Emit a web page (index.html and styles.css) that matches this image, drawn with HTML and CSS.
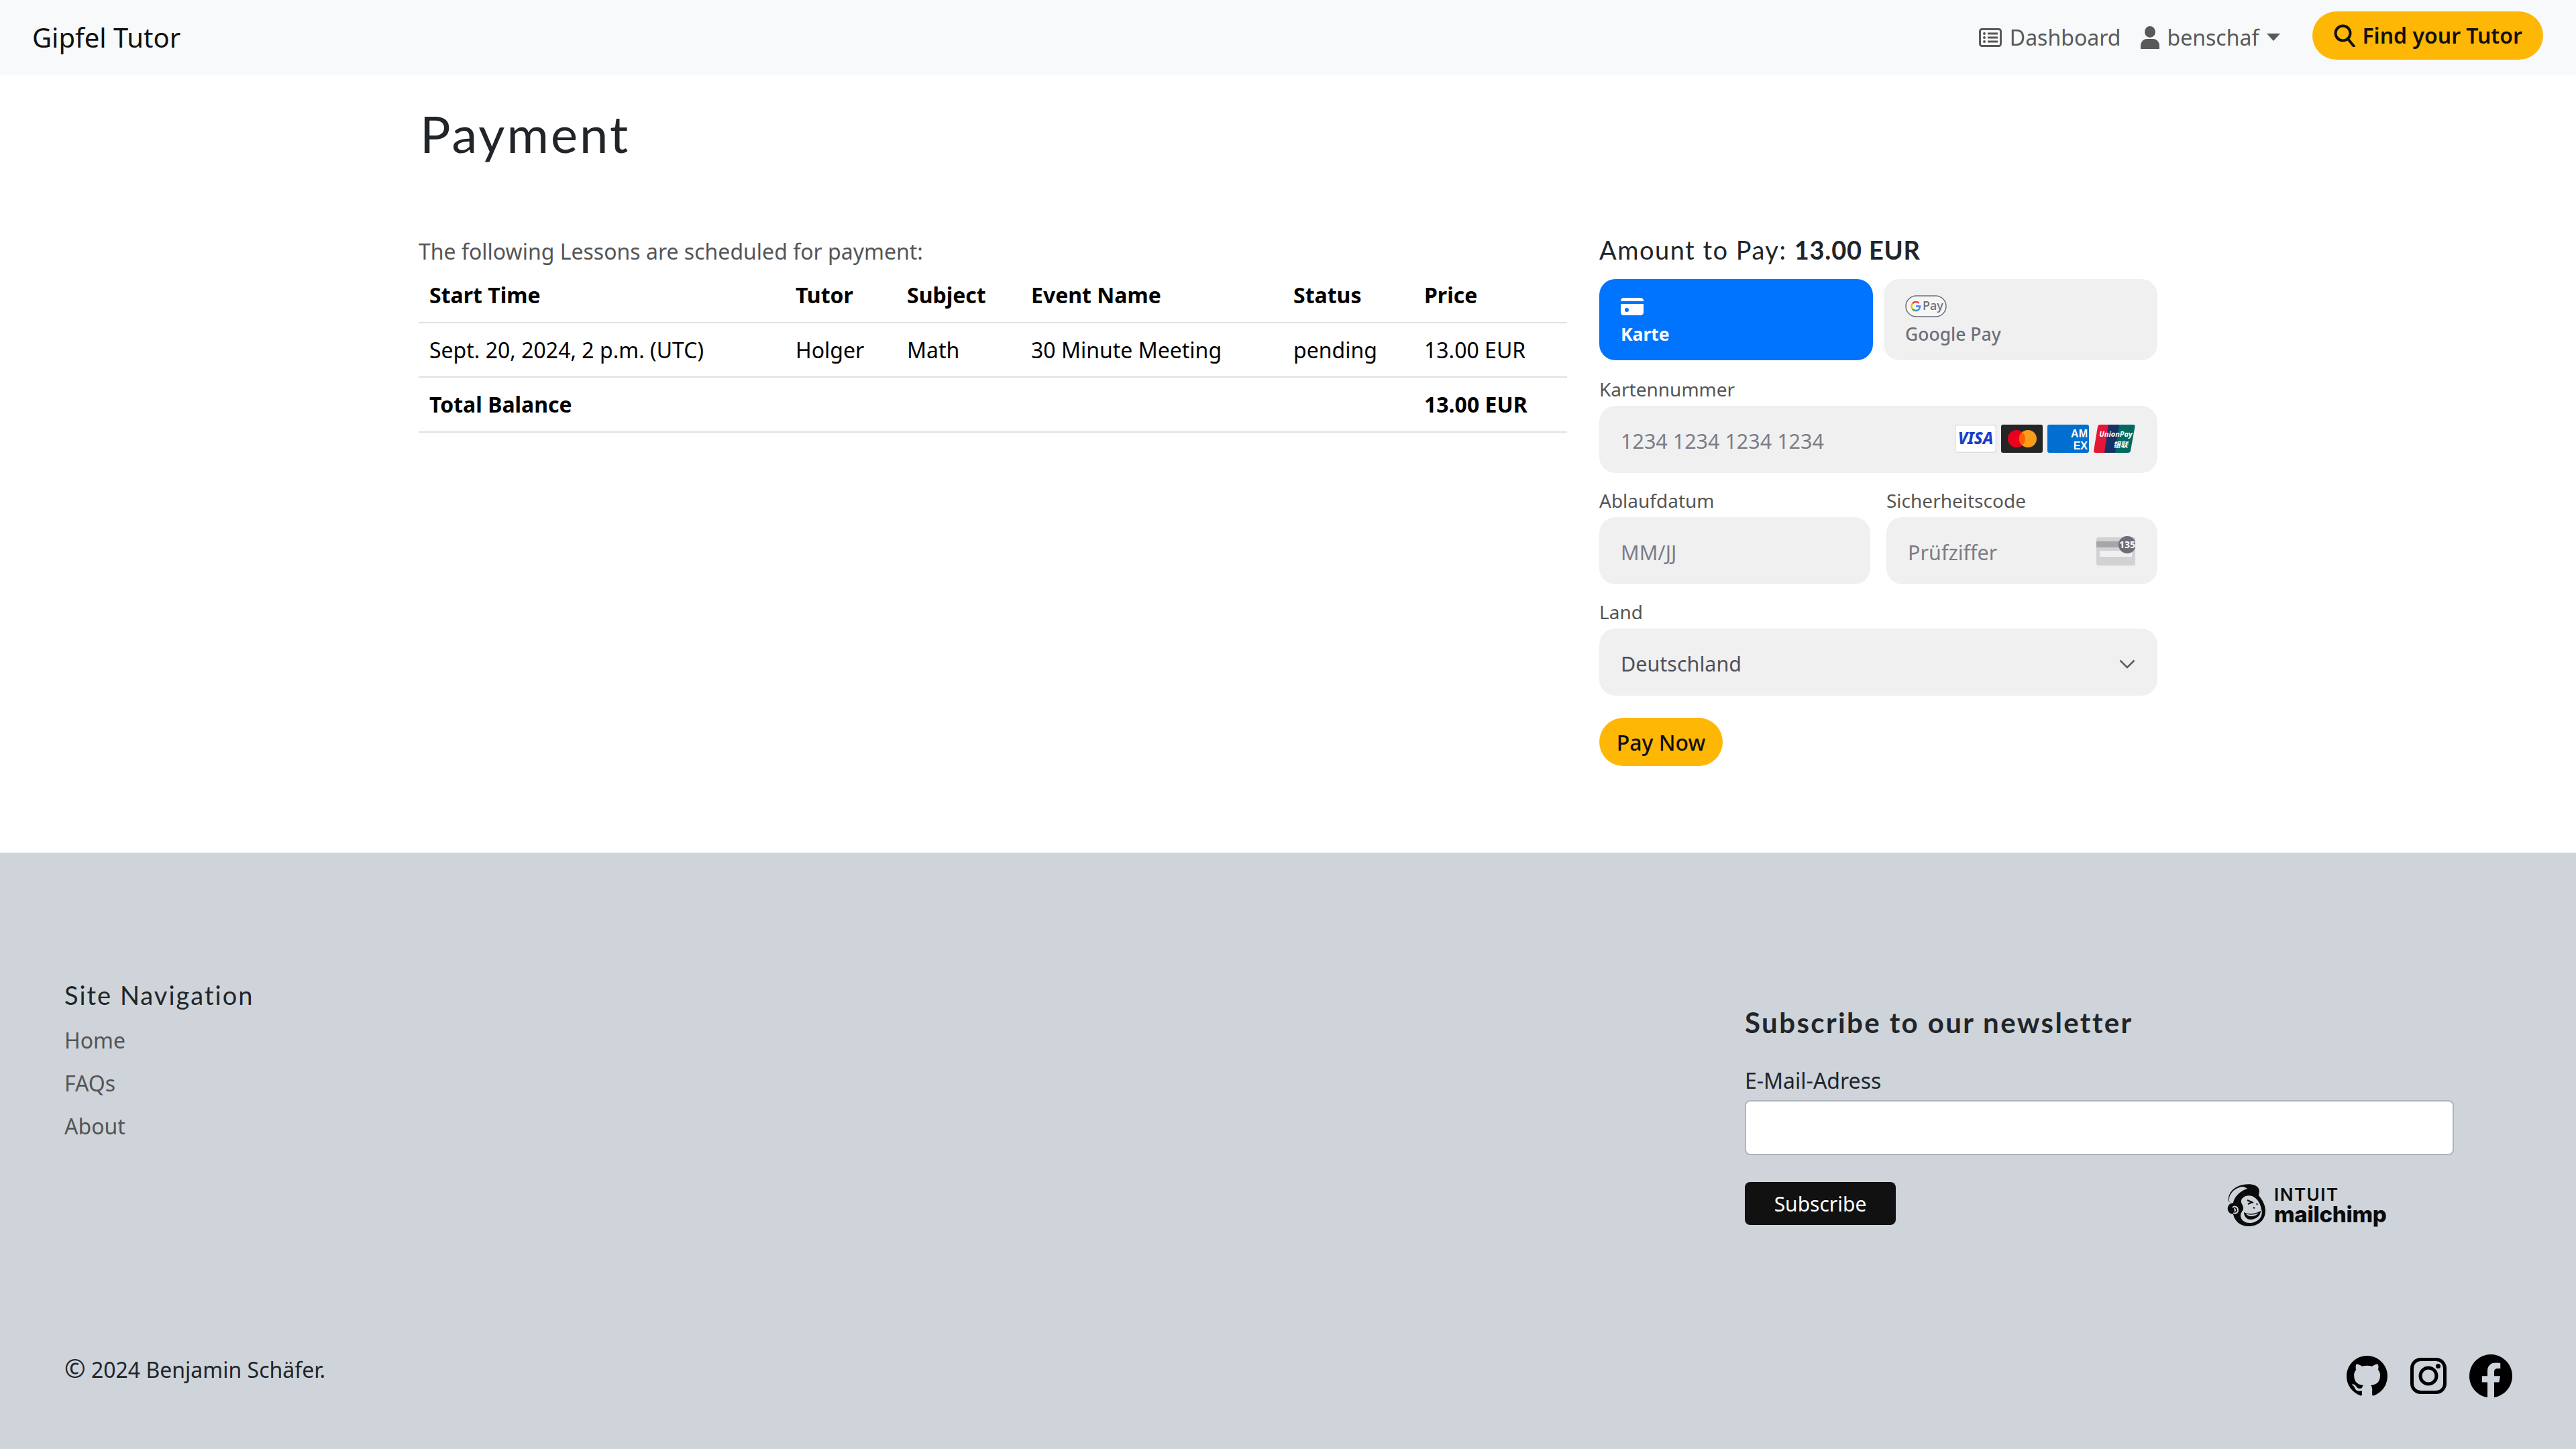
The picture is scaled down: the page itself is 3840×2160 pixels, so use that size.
FILE: index.html
```html
<!DOCTYPE html>
<html>
<head>
<title>Payment - Gipfel Tutor</title>
<link rel="stylesheet" href="styles.css">
</head>
<body>
  <nav class="navbar">
    <a class="brand">Gipfel Tutor</a>
    <div class="nav-right">
      <a class="nav-link">
        <svg class="icon-dash" viewBox="0 0 34 28"><rect x="1.5" y="1.5" width="31" height="25" rx="3" fill="none" stroke="#595959" stroke-width="3"/><g fill="#595959"><circle cx="8" cy="8" r="2"/><circle cx="8" cy="14" r="2"/><circle cx="8" cy="20" r="2"/><rect x="13" y="6.5" width="15" height="3"/><rect x="13" y="12.5" width="15" height="3"/><rect x="13" y="18.5" width="15" height="3"/></g></svg>
        Dashboard
      </a>
      <a class="nav-link user-link">
        <svg class="icon-user" viewBox="0 0 28 34"><ellipse cx="14" cy="8.5" rx="8" ry="8.5" fill="#595959"/><path d="M0 34V29C0 23 5 19 9 19H19C23 19 28 23 28 29V34Z" fill="#595959"/></svg>
        benschaf
        <span class="caret"></span>
      </a>
      <a class="btn-find">
        <svg class="icon-search" viewBox="0 0 32 34"><circle cx="13.5" cy="13.5" r="11" fill="none" stroke="#111" stroke-width="4"/><path d="M21 22L30 33" stroke="#111" stroke-width="4" stroke-linecap="round"/></svg>
        Find your Tutor
      </a>
    </div>
  </nav>

  <main class="page">
    <h1 class="page-title">Payment</h1>
    <div class="columns">
      <section class="lessons">
        <p class="lessons-intro">The following Lessons are scheduled for payment:</p>
        <table class="lesson-table">
          <thead>
            <tr><th class="col-time">Start Time</th><th class="col-tutor">Tutor</th><th class="col-subject">Subject</th><th class="col-event">Event Name</th><th class="col-status">Status</th><th>Price</th></tr>
          </thead>
          <tbody>
            <tr><td>Sept. 20, 2024, 2 p.m. (UTC)</td><td>Holger</td><td>Math</td><td>30 Minute Meeting</td><td>pending</td><td>13.00 EUR</td></tr>
            <tr class="total-row"><td>Total Balance</td><td></td><td></td><td></td><td></td><td>13.00 EUR</td></tr>
          </tbody>
        </table>
      </section>

      <section class="checkout">
        <h2 class="amount">Amount to Pay: <strong>13.00 EUR</strong></h2>
        <div class="tabs">
          <div class="tab tab-active">
            <svg class="icon-card" viewBox="0 0 34 26"><path d="M0 4C0 2 2 0 4 0H30C32 0 34 2 34 4V5H0ZM0 9H34V22C34 24 32 26 30 26H4C2 26 0 24 0 22Z" fill="#fff"/><circle cx="9" cy="18" r="3" fill="#0074ff"/></svg>
            <span>Karte</span>
          </div>
          <div class="tab">
            <svg class="icon-gpay" viewBox="0 0 62 33"><rect x="1" y="1" width="60" height="31" rx="15.5" fill="#fff" fill-opacity=".4" stroke="#6d6e78" stroke-width="1.5"/><path d="M16 16.500H22C22 21 19 23 16 23" fill="none" stroke="#4285f4" stroke-width="2.500"/><path d="M11 12.500A6.500 6.500 0 0 1 20.500 11.800" fill="none" stroke="#ea4335" stroke-width="2.500"/><path d="M10.800 20.500A6.500 6.500 0 0 0 16.500 23" fill="none" stroke="#34a853" stroke-width="2.500"/><path d="M11 12.500A6.500 6.500 0 0 0 10.800 20.500" fill="none" stroke="#fbbc04" stroke-width="2.500"/><text x="26" y="22" class="gpay-text">Pay</text></svg>
            <span>Google Pay</span>
          </div>
        </div>

        <label class="field-label">Kartennummer</label>
        <div class="field">
          <span class="placeholder">1234 1234 1234 1234</span>
          <div class="brands">
            <svg class="brand-icon" viewBox="0 0 62 42"><rect x=".75" y=".75" width="60.5" height="40.5" rx="3" fill="#fff" stroke="#e0e0e0" stroke-width="1.5"/><text x="31" y="29" class="visa-text">VISA</text></svg>
            <svg class="brand-icon" viewBox="0 0 62 42"><rect width="62" height="42" rx="3" fill="#252525"/><circle cx="23" cy="21" r="13" fill="#eb001b"/><circle cx="40" cy="21" r="13" fill="#f79e1b"/><path d="M31.500 11.200A13 13 0 0 1 31.500 30.800A13 13 0 0 1 31.500 11.200Z" fill="#ff5f00"/></svg>
            <svg class="brand-icon" viewBox="0 0 62 42"><rect width="62" height="42" rx="3" fill="#006fcf"/><text x="60" y="19" class="amex-text">AM</text><text x="60" y="37" class="amex-text">EX</text></svg>
            <svg class="brand-icon" viewBox="0 0 62 42"><path d="M10 0H24L18 42H3C1 42 0 41 0 39L6 3C6 1 8 0 10 0Z" fill="#e21836"/><path d="M22 0H40L34 42H16Z" fill="#173166"/><path d="M38 0H58C61 0 62 1 61.500 3L55 39C55 41 53 42 51 42H32Z" fill="#006a60"/><text x="33" y="18" class="up-text">UnionPay</text><text x="40" y="34" class="up-text">银联</text></svg>
          </div>
        </div>

        <div class="field-row">
          <div class="field-col">
            <label class="field-label">Ablaufdatum</label>
            <div class="field"><span class="placeholder">MM/JJ</span></div>
          </div>
          <div class="field-col">
            <label class="field-label">Sicherheitscode</label>
            <div class="field">
              <span class="placeholder">Prüfziffer</span>
              <svg class="icon-cvc" viewBox="0 0 58 44"><rect y="2" width="58" height="42" rx="3" fill="#d2d2d4"/><rect y="8" width="58" height="9" fill="#a5a5aa"/><rect x="5" y="22" width="48" height="9" fill="#f0f0f0"/><circle cx="46" cy="13" r="13" fill="#6d6e78"/><text x="46" y="18" class="cvc-text">135</text></svg>
            </div>
          </div>
        </div>

        <label class="field-label">Land</label>
        <div class="field">
          <span class="select-value">Deutschland</span>
          <svg class="icon-chevron" viewBox="0 0 24 14"><path d="M1.500 1.500L12 12L22.500 1.500" fill="none" stroke="#5c5d68" stroke-width="2.500"/></svg>
        </div>

        <button class="btn-pay">Pay Now</button>
      </section>
    </div>
  </main>

  <footer class="footer">
    <div class="footer-top">
      <div class="site-nav">
        <h3 class="site-nav-title">Site Navigation</h3>
        <a class="site-link">Home</a>
        <a class="site-link">FAQs</a>
        <a class="site-link">About</a>
      </div>
      <div class="newsletter">
        <h2 class="newsletter-title">Subscribe to our newsletter</h2>
        <label class="email-label">E-Mail-Adress</label>
        <input class="email-input" type="email">
        <div class="newsletter-actions">
          <button class="btn-subscribe">Subscribe</button>
          <div class="mailchimp">
            <svg class="icon-chimp" viewBox="0 0 60 64">
              <path d="M4 24C3 12 14 3 26 1C36-1 47 1 49 7C51 11 49 14 49 17C55 24 59 32 59 40C59 54 48 63 34 63C21 63 13 55 11 45C3 44 1 37 4 32C5 30 7 29 9 29C6 28 4 26 4 24Z" fill="#0b0b0b"/>
              <path d="M5 25C4 14 14 6 24 4C28 4 31 6 32 7C22 10 13 18 11 28C8 29 5 28 5 25Z" fill="#ced4da"/>
              <path d="M24 22C30 15 40 17 44 21C48 24 52 30 53 38C56 47 50 56 38 58C28 59 22 53 22 47C22 43 25 41 26 37C27 31 20 28 24 22Z" fill="#ced4da"/>
              <path d="M27 42C34 46 43 45 52 40C52 48 44 53 37 53C31 53 27 48 27 42Z" fill="#0b0b0b"/>
              <path d="M30 44C36 47 43 46 49 43C47 46 42 48 37 48C34 48 31 46 30 44Z" fill="#ced4da"/>
              <path d="M32 24L41 28M33 30L39 27M46 29L47 31M41 35L43 36" fill="none" stroke="#0b0b0b" stroke-width="2"/>
              <path d="M10 35C13 32 18 34 18 39C18 43 14 45 11 43M12 37C14 37 15 39 13 41" fill="none" stroke="#ced4da" stroke-width="2"/>
            </svg>
            <div class="chimp-words">
              <span class="chimp-intuit">INTUIT</span>
              <span class="chimp-name">mailchimp</span>
            </div>
          </div>
        </div>
      </div>
    </div>
    <div class="footer-bottom">
      <span class="copyright"><span class="copy-sign">©</span> 2024 Benjamin Schäfer.</span>
      <div class="socials">
        <svg class="icon-github" viewBox="0 0 16 16"><path d="M8 0C3.58 0 0 3.58 0 8c0 3.54 2.29 6.53 5.47 7.59.4.07.55-.17.55-.38 0-.19-.01-.82-.01-1.49-2.01.37-2.53-.49-2.69-.94-.09-.23-.48-.94-.82-1.13-.28-.15-.68-.52-.01-.53.63-.01 1.08.58 1.23.82.72 1.21 1.87.87 2.33.66.07-.52.28-.87.51-1.07-1.78-.2-3.64-.89-3.64-3.95 0-.87.31-1.59.82-2.15-.08-.2-.36-1.02.08-2.12 0 0 .67-.21 2.2.82.64-.18 1.32-.27 2-.27.68 0 1.36.09 2 .27 1.53-1.04 2.2-.82 2.2-.82.44 1.1.16 1.92.08 2.12.51.56.82 1.27.82 2.15 0 3.07-1.87 3.75-3.65 3.95.29.25.54.73.54 1.48 0 1.07-.01 1.93-.01 2.2 0 .21.15.46.55.38A8.012 8.012 0 0 0 16 8c0-4.42-3.58-8-8-8z"/></svg>
        <svg class="icon-insta" viewBox="0 0 54 54"><rect x="2.500" y="2.500" width="49" height="49" rx="13" fill="none" stroke="#000" stroke-width="5"/><circle cx="27" cy="27" r="12" fill="none" stroke="#000" stroke-width="5"/><circle cx="41.500" cy="12.500" r="3.500"/></svg>
        <svg class="icon-fb" viewBox="0 0 16 16"><path d="M16 8.049c0-4.446-3.582-8.05-8-8.05C3.58 0-.002 3.603-.002 8.05c0 4.017 2.926 7.347 6.75 7.951v-5.625h-2.03V8.05H6.75V6.275c0-2.017 1.195-3.131 3.022-3.131.876 0 1.791.157 1.791.157v1.98h-1.009c-.993 0-1.303.621-1.303 1.258v1.51h2.218l-.354 2.326H9.25V16c3.824-.604 6.75-3.934 6.75-7.951z"/></svg>
      </div>
    </div>
  </footer>
</body>
</html>
```

FILE: styles.css
```css
* {
  box-sizing: border-box;
}

body {
  font-family: "Noto Sans", sans-serif;
  font-size: 32px;
  color: #212529;
  background-color: #fff;
  margin: 0;
  padding: 0;
}

h1, h2, h3, p {
  margin: 0;
  font-weight: 400;
}

/* navbar */
.navbar {
  height: 111px;
  background-color: #f8f9fa;
  display: flex;
  align-items: center;
  justify-content: space-between;
  padding: 0 49px 0 48px;
}

.brand {
  font-size: 40px;
  color: #111;
}

.nav-right {
  display: flex;
  align-items: center;
}

.nav-link {
  display: flex;
  align-items: center;
  gap: 12px;
  font-size: 32px;
  color: #595959;
  margin-right: 30px;
}

.user-link {
  gap: 11px;
  margin-right: 48px;
}

.icon-dash {
  width: 34px;
  height: 28px;
}

.icon-user {
  width: 28px;
  height: 34px;
}

.caret {
  width: 0;
  height: 0;
  margin-left: 1px;
  border-top: 11px solid #595959;
  border-left: 10px solid transparent;
  border-right: 10px solid transparent;
}

.btn-find {
  display: flex;
  align-items: center;
  gap: 10px;
  height: 72px;
  margin-bottom: 6px;
  padding: 0 31px 0 32px;
  border-radius: 36px;
  background-color: #ffb706;
  color: #111;
  font-size: 32px;
  font-weight: 600;
}

.icon-search {
  width: 32px;
  height: 34px;
}

/* main */
.page {
  width: 2592px;
  height: 1160px;
  margin: 0 auto;
}

.page-title {
  font-family: Lato, sans-serif;
  font-size: 76px;
  line-height: 96px;
  letter-spacing: 3px;
  padding: 40px 0 0 2px;
  height: 231px;
}

.columns {
  display: flex;
  gap: 48px;
}

.lessons {
  width: 1712px;
}

.lessons-intro {
  font-size: 32px;
  line-height: 44px;
  margin-top: 11px;
  color: #555;
}

.lesson-table {
  width: 100%;
  border-collapse: collapse;
  table-layout: fixed;
  margin-top: 2px;
  font-size: 32px;
  color: #000;
}

.lesson-table th,
.lesson-table td {
  text-align: left;
  padding: 0 16px;
  height: 81.500px;
  border-bottom: 2px solid #dee2e6;
}

.lesson-table th,
.total-row td {
  font-weight: 700;
}

.col-time { width: 546px; }
.col-tutor { width: 166px; }
.col-subject { width: 185px; }
.col-event { width: 391px; }
.col-status { width: 195px; }

.checkout {
  width: 832px;
}

.amount {
  font-family: Lato, sans-serif;
  font-size: 38px;
  line-height: 48px;
  letter-spacing: 1.500px;
  margin-top: 6px;
  color: #212529;
}

.amount strong {
  font-weight: 700;
  letter-spacing: .8px;
}

.tabs {
  display: flex;
  gap: 16px;
  margin: 20px 0 24px;
}

.tab {
  flex: 1;
  height: 121px;
  border-radius: 24px;
  background-color: #f0f0f0;
  color: #6d6e78;
  padding: 24px 32px 0;
  font-size: 26.500px;
  font-weight: 500;
  display: flex;
  flex-direction: column;
  align-items: flex-start;
}

.tab span {
  line-height: 38px;
  margin-top: 6px;
}

.tab-active {
  background-color: #0074ff;
  color: #fff;
  font-weight: 700;
}

.icon-card {
  width: 34px;
  height: 26px;
  margin-top: 4px;
  margin-bottom: 3px;
}

.icon-gpay {
  width: 62px;
  height: 33px;
}

.gpay-text {
  font-family: "Noto Sans", sans-serif;
  font-size: 18px;
  font-weight: 500;
  fill: #6d6e78;
}

.field-label {
  display: block;
  font-size: 28px;
  line-height: 38px;
  margin: 22px 0 6px;
  color: #555;
}

.field {
  height: 100px;
  border-radius: 24px;
  background-color: #f0f0f0;
  display: flex;
  align-items: center;
  justify-content: space-between;
  padding: 0 33px 0 32px;
}

.placeholder {
  font-size: 30.500px;
  margin-top: 4px;
  color: #7c7d86;
}

.select-value {
  font-size: 30.500px;
  margin-top: 4px;
  color: #4f505b;
}

.brands {
  display: flex;
  gap: 7px;
  margin-top: -2px;
}

.brand-icon {
  width: 62px;
  height: 42px;
}

.visa-text {
  font-family: "Noto Sans", sans-serif;
  font-size: 24px;
  font-weight: 800;
  font-style: italic;
  fill: #1a3ec8;
  text-anchor: middle;
}

.amex-text {
  font-family: "Liberation Sans", sans-serif;
  font-size: 16px;
  font-weight: 700;
  fill: #fff;
  text-anchor: end;
}

.up-text {
  font-family: "Noto Sans", "Noto Sans CJK SC", sans-serif;
  font-size: 11px;
  font-weight: 700;
  font-style: italic;
  fill: #fff;
  text-anchor: middle;
}

.field-row {
  display: flex;
  gap: 24px;
}

.field-col {
  flex: 1;
}

.icon-cvc {
  width: 58px;
  height: 44px;
}

.cvc-text {
  font-family: "Noto Sans", sans-serif;
  font-size: 14px;
  font-weight: 700;
  fill: #fff;
  text-anchor: middle;
}

.icon-chevron {
  width: 24px;
  height: 14px;
  margin-top: 6px;
}

.btn-pay {
  display: block;
  width: 184px;
  height: 72px;
  margin-top: 33px;
  border: none;
  border-radius: 36px;
  background-color: #ffb706;
  color: #111;
  font-family: "Noto Sans", sans-serif;
  font-size: 32px;
  font-weight: 500;
  padding: 0;
}

/* footer */
.footer {
  height: 889px;
  background-color: #ced4da;
  padding: 0 95px 0 96px;
}

.footer-top {
  display: flex;
  justify-content: space-between;
  height: 740px;
  padding-top: 188px;
}

.site-nav {
  display: flex;
  flex-direction: column;
}

.site-nav-title {
  font-family: Lato, sans-serif;
  font-size: 38px;
  line-height: 48px;
  letter-spacing: 2px;
  margin-bottom: 12px;
  color: #212529;
}

.site-link {
  font-size: 32px;
  line-height: 64px;
  color: #555;
}

.newsletter {
  width: 1057px;
  margin-right: 87px;
  padding-top: 40px;
}

.newsletter-title {
  font-family: Lato, sans-serif;
  font-size: 42px;
  font-weight: 700;
  line-height: 50px;
  letter-spacing: 2.400px;
}

.email-label {
  display: block;
  font-size: 32px;
  line-height: 44px;
  margin-top: 40px;
}

.email-input {
  display: block;
  width: 100%;
  height: 82px;
  margin-top: 7px;
  background-color: #fff;
  border: 2px solid #adb5bd;
  border-radius: 8px;
}

.newsletter-actions {
  display: flex;
  margin-top: 40px;
}

.btn-subscribe {
  width: 225px;
  height: 64px;
  border: none;
  border-radius: 8px;
  background-color: #111;
  color: #fff;
  font-family: "Noto Sans", sans-serif;
  font-size: 30px;
  padding: 0;
}

.mailchimp {
  display: flex;
  align-items: center;
  gap: 12px;
  margin-left: 492px;
  margin-top: 3px;
}

.icon-chimp {
  width: 60px;
  height: 64px;
}

.chimp-words {
  display: flex;
  flex-direction: column;
  font-family: Inter, sans-serif;
  color: #0b0b0b;
}

.chimp-intuit {
  font-size: 26px;
  font-weight: 600;
  line-height: 26px;
  letter-spacing: 1.500px;
}

.chimp-name {
  font-size: 33px;
  font-weight: 800;
  line-height: 32px;
  letter-spacing: -.3px;
}

.footer-bottom {
  display: flex;
  justify-content: space-between;
  align-items: center;
}

.copyright {
  font-size: 32px;
  margin-top: -12px;
}

.copy-sign {
  font-size: 38px;
  line-height: 32px;
}

.socials {
  display: flex;
  align-items: center;
  gap: 34px;
  margin-top: 8px;
}

.icon-github {
  width: 61px;
  height: 61px;
}

.icon-insta {
  width: 54px;
  height: 54px;
}

.icon-fb {
  width: 64px;
  height: 64px;
}
```
